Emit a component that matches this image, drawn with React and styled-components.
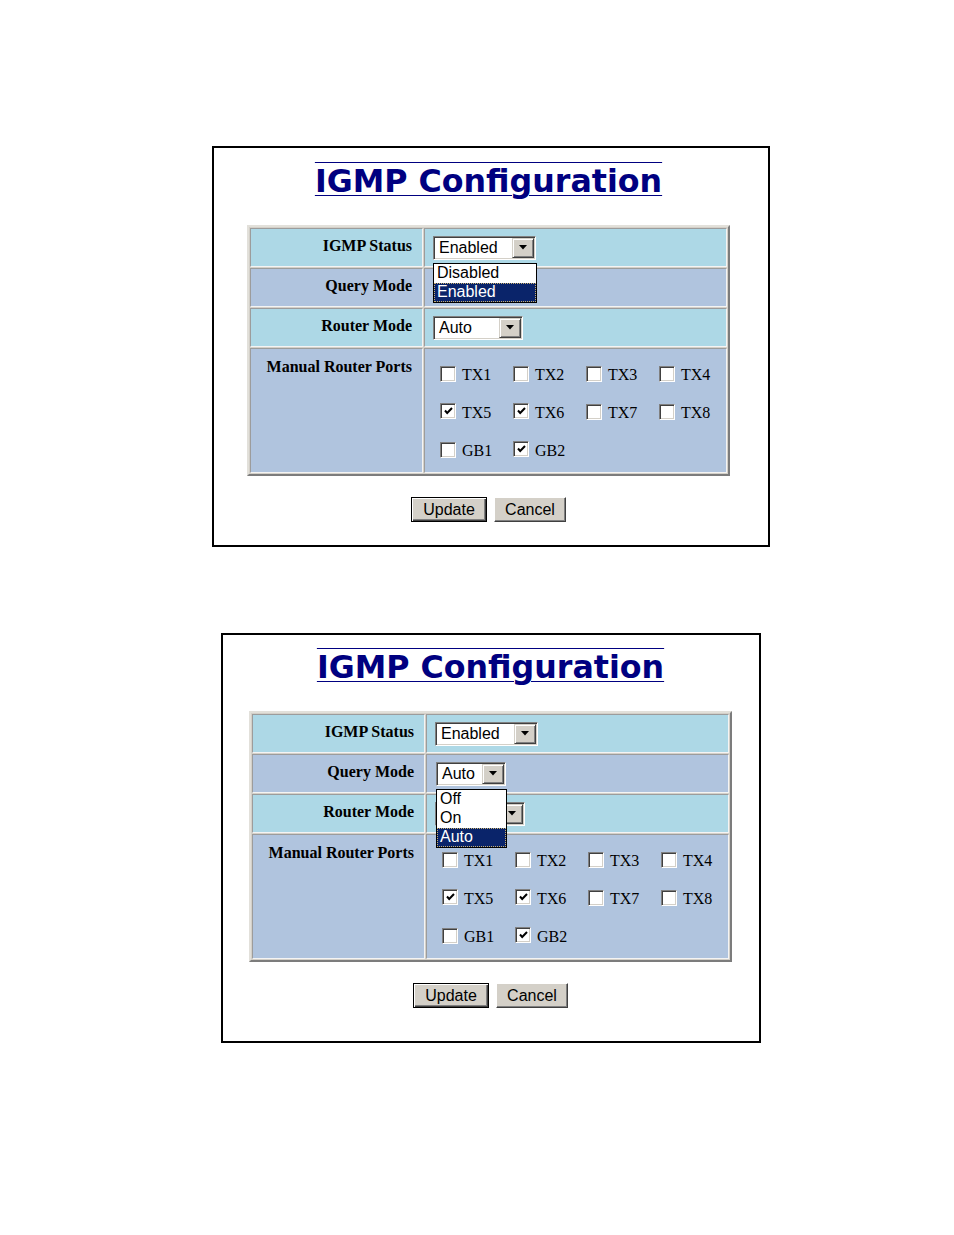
import React from 'react';
import styled, { createGlobalStyle } from 'styled-components';

const GlobalStyle = createGlobalStyle`
  html, body {
    margin: 0;
    padding: 0;
    background: #fff;
  }
`;

const Page = styled.div`
  display: flex;
  flex-direction: column;
  align-items: center;
  gap: 86px;
  padding: 146px 0 0 28px;
  width: 954px;
  box-sizing: border-box;
`;

const Frame = styled.div`
  box-sizing: border-box;
  width: ${p => p.$width}px;
  height: ${p => p.$height}px;
  border: 2px solid #000;
  display: flex;
  flex-direction: column;
  align-items: center;
  padding-top: ${p => p.$top}px;
  padding-right: ${p => p.$shift}px;
`;

const Title = styled.div`
  font-family: "DejaVu Sans", Verdana, sans-serif;
  font-weight: bold;
  font-size: 31.7px;
  line-height: 37px;
  color: #000080;
  text-decoration: underline overline;
  text-decoration-thickness: 1px;
  text-underline-offset: 3px;
`;

const Table = styled.table`
  margin-top: 25px;
  width: 483px;
  table-layout: fixed;
  border-collapse: separate;
  border-spacing: 1px;
  border: 2px solid;
  border-color: #e2e0da #7c7c7c #7c7c7c #e2e0da;
  background: #d4d0c8;
`;

const Cell = styled.td`
  box-sizing: border-box;
  height: ${p => (p.$tall ? 125 : 39)}px;
  border: 1px solid;
  border-color: #9c9c9c #f4f4f4 #f4f4f4 #9c9c9c;
  background: ${p => (p.$alt ? '#b0c4de' : '#add8e6')};
  vertical-align: ${p => (p.$tall ? 'top' : 'middle')};
  padding: 0;
`;

const Label = styled(Cell)`
  width: 173px;
  text-align: right;
  padding-right: 10px;
  padding-top: ${p => (p.$tall ? 8 : 0)}px;
  padding-bottom: ${p => (p.$tall ? 0 : 3)}px;
  font-family: "Liberation Serif", "Times New Roman", serif;
  font-weight: bold;
  font-size: 16px;
  line-height: 20px;
  color: #000;
`;

const Value = styled(Cell)`
  width: 303px;
  padding-left: 8px;
  padding-top: ${p => (p.$tall ? 7 : 0)}px;
`;

const SelectWrap = styled.div`
  position: relative;
  display: inline-block;
  vertical-align: middle;
  margin-left: ${p => p.$nudge || 0}px;
`;

const SelectBox = styled.div`
  display: flex;
  box-sizing: border-box;
  width: ${p => p.$width}px;
  height: 24px;
  padding: 1px;
  border: 1px solid;
  border-color: #808080 #fff #fff #808080;
  box-shadow: inset 1px 1px #404040, inset -1px -1px #d4d0c8;
  background: #fff;
`;

const SelectText = styled.span`
  flex: 1;
  padding-left: 4px;
  font-family: "Liberation Sans", Arial, sans-serif;
  font-size: 16px;
  line-height: 20px;
  color: #000;
  white-space: nowrap;
  overflow: hidden;
`;

const ArrowButton = styled.span`
  box-sizing: border-box;
  width: 22px;
  height: 20px;
  display: flex;
  align-items: center;
  justify-content: center;
  background: #d4d0c8;
  border: 1px solid;
  border-color: #d4d0c8 #404040 #404040 #d4d0c8;
  box-shadow: inset 1px 1px #fff, inset -1px -1px #808080;
`;

const DropList = styled.div`
  position: absolute;
  top: 27px;
  left: 0;
  z-index: 2;
  box-sizing: border-box;
  width: ${p => p.$width}px;
  border: 1px solid #000;
  background: #fff;
`;

const Option = styled.div`
  height: 19px;
  padding-left: 3px;
  font-family: "Liberation Sans", Arial, sans-serif;
  font-size: 16px;
  line-height: 18px;
  color: ${p => (p.$active ? '#fff' : '#000')};
  background: ${p => (p.$active ? '#0a246a' : '#fff')};
  outline: ${p => (p.$active ? '1px dotted #c8b070' : 'none')};
  outline-offset: -1px;
`;

const Ports = styled.div`
  display: grid;
  grid-template-columns: repeat(4, 73px);
  grid-auto-rows: 38px;
  margin-left: 7px;
`;

const Port = styled.label`
  display: flex;
  align-items: center;
  gap: 6px;
  font-family: "Liberation Serif", "Times New Roman", serif;
  font-size: 16px;
  color: #000;
`;

const Box = styled.span`
  box-sizing: border-box;
  width: 16px;
  height: 16px;
  display: flex;
  align-items: center;
  justify-content: center;
  background: #fff;
  border: 1px solid;
  border-color: #808080 #fff #fff #808080;
  box-shadow: inset 1px 1px #404040, inset -1px -1px #d4d0c8;
  margin-top: ${p => (p.$checked ? -4 : -2)}px;
`;

const Buttons = styled.div`
  display: flex;
  gap: 7px;
  margin-top: 21px;
`;

const Button = styled.button`
  box-sizing: border-box;
  width: ${p => p.$width}px;
  height: 25px;
  padding: 0;
  font-family: "Liberation Sans", Arial, sans-serif;
  font-size: 16px;
  color: #000;
  background: #d4d0c8;
  border: 1px solid;
  border-color: ${p => (p.$default ? '#000' : '#fff #404040 #404040 #fff')};
  box-shadow: ${p =>
    p.$default
      ? 'inset 1px 1px #fff, inset -1px -1px #404040, inset -2px -2px #808080'
      : 'inset -1px -1px #808080'};
`;

function Arrow() {
  return (
    <svg width="8" height="5" viewBox="0 0 8 5">
      <path d="M0 0 H8 L4 4.5 Z" fill="#000" />
    </svg>
  );
}

function Select({ value, width, open, options, listWidth, nudge }) {
  return (
    <SelectWrap $nudge={nudge}>
      <SelectBox $width={width}>
        <SelectText>{value}</SelectText>
        <ArrowButton>
          <Arrow />
        </ArrowButton>
      </SelectBox>
      {open && (
        <DropList $width={listWidth}>
          {options.map(o => (
            <Option key={o} $active={o === value}>
              {o}
            </Option>
          ))}
        </DropList>
      )}
    </SelectWrap>
  );
}

function Checkbox({ checked }) {
  return (
    <Box $checked={checked}>
      {checked && (
        <svg width="9" height="8" viewBox="0 0 9 8">
          <path d="M1 3.5 L3.2 6 L8 1" fill="none" stroke="#000" strokeWidth="2" />
        </svg>
      )}
    </Box>
  );
}

const ports = [
  ['TX1', false], ['TX2', false], ['TX3', false], ['TX4', false],
  ['TX5', true], ['TX6', true], ['TX7', false], ['TX8', false],
  ['GB1', false], ['GB2', true],
];

function Config({ open, frame }) {
  const statusOpen = open === 'status';
  const queryOpen = open === 'query';
  return (
    <Frame $width={frame.width} $height={frame.height} $top={frame.top} $shift={frame.shift}>
      <Title>IGMP Configuration</Title>
      <Table>
        <tbody>
          <tr>
            <Label>IGMP Status</Label>
            <Value>
              <Select
                value="Enabled"
                width={103}
                open={statusOpen}
                listWidth={104}
                options={['Disabled', 'Enabled']}
              />
            </Value>
          </tr>
          <tr>
            <Label $alt>Query Mode</Label>
            <Value $alt>
              <Select
                value="Auto"
                width={70}
                nudge={queryOpen ? 1 : 0}
                open={queryOpen}
                listWidth={71}
                options={['Off', 'On', 'Auto']}
              />
            </Value>
          </tr>
          <tr>
            <Label>Router Mode</Label>
            <Value>
              <Select value="Auto" width={90} />
            </Value>
          </tr>
          <tr>
            <Label $alt $tall>Manual Router Ports</Label>
            <Value $alt $tall>
              <Ports>
                {ports.map(([name, checked]) => (
                  <Port key={name}>
                    <Checkbox checked={checked} />
                    {name}
                  </Port>
                ))}
              </Ports>
            </Value>
          </tr>
        </tbody>
      </Table>
      <Buttons>
        <Button $default $width={76}>Update</Button>
        <Button $width={72}>Cancel</Button>
      </Buttons>
    </Frame>
  );
}

export default function App() {
  return (
    <>
      <GlobalStyle />
      <Page>
        <Config open="status" frame={{ width: 558, height: 401, top: 15, shift: 5 }} />
        <Config open="query" frame={{ width: 540, height: 410, top: 14, shift: 1 }} />
      </Page>
    </>
  );
}
